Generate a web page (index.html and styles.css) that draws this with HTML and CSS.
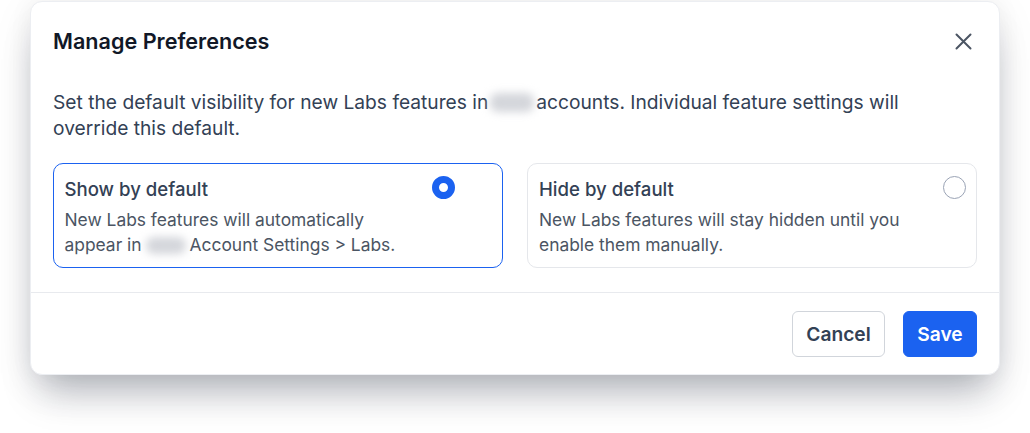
FILE: index.html
```html
<!DOCTYPE html>
<html lang="en">
<head>
<meta charset="utf-8">
<title>Manage Preferences</title>
<link rel="stylesheet" href="styles.css">
</head>
<body>
<div class="modal">
  <div class="modal-header">
    <h2 class="modal-title">Manage Preferences</h2>
    <button class="close-btn" aria-label="Close">
      <svg width="17" height="17" viewBox="0 0 17 17" fill="none" stroke="#4b5563" stroke-width="2" stroke-linecap="round"><path d="M1.5 1.5l14 14M15.5 1.5l-14 14"/></svg>
    </button>
  </div>
  <div class="modal-body">
    <p class="intro">Set the default visibility for new Labs features in<span class="redact"></span>accounts. Individual feature settings will override this default.</p>
    <div class="options">
      <label class="option selected">
        <div class="option-text">
          <div class="option-title">Show by default</div>
          <div class="option-desc">New Labs features will automatically<br>appear in<span class="redact small"></span>Account Settings &gt; Labs.</div>
        </div>
        <span class="radio checked"></span>
      </label>
      <label class="option">
        <div class="option-text">
          <div class="option-title">Hide by default</div>
          <div class="option-desc">New Labs features will stay hidden until you<br>enable them manually.</div>
        </div>
        <span class="radio"></span>
      </label>
    </div>
  </div>
  <div class="modal-footer">
    <button class="btn btn-secondary">Cancel</button>
    <button class="btn btn-primary">Save</button>
  </div>
</div>
</body>
</html>
```

FILE: styles.css
```css
* { box-sizing: border-box; }
html, body { margin: 0; background: #ffffff; }
body {
  font-family: Inter, "Noto Sans", "Liberation Sans", sans-serif;
  padding: 1px 30px 60px 30px;
}
.modal {
  width: 970px;
  background: #fff;
  border: 1px solid #eceef2;
  border-radius: 12px;
  box-shadow: 0 28px 36px -12px rgba(15, 23, 42, 0.28), 0 10px 40px rgba(15, 23, 42, 0.08), 0 0 24px rgba(15, 23, 42, 0.05);
}
.modal-header {
  display: flex;
  justify-content: space-between;
  align-items: center;
  padding: 24px 27px 0 22px;
}
.modal-title {
  margin: 0;
  font-size: 21.6px;
  line-height: 30px;
  font-weight: 600;
  color: #111827;
}
.close-btn {
  border: 0;
  background: none;
  padding: 0;
  width: 17px;
  height: 17px;
  display: flex;
  cursor: pointer;
}
.modal-body {
  padding: 0 22px;
}
.intro {
  margin: 33px 0 0;
  font-size: 19.2px;
  line-height: 26px;
  color: #334155;
}
.redact {
  display: inline-block;
  width: 44px;
  height: 19px;
  margin: 0 2px;
  vertical-align: -3px;
  background: #d4d6db;
  border-radius: 8px;
  filter: blur(4px);
}
.redact.small { width: 40px; height: 17px; margin: 0 4px; }
.options {
  display: grid;
  grid-template-columns: 1fr 1fr;
  gap: 24px;
  margin-top: 22px;
}
.option {
  display: flex;
  justify-content: space-between;
  align-items: flex-start;
  border: 1px solid #e5e7eb;
  border-radius: 10px;
  padding: 12px 10px 10px 11px;
  min-height: 105px;
}
.option.selected {
  border: 1.5px solid #1b62f0;
  padding: 11.5px 9.5px 9.5px 10.5px;
}
.option-title {
  font-size: 18.6px;
  line-height: 26px;
  font-weight: 500;
  color: #334155;
}
.option-desc {
  margin-top: 5px;
  font-size: 17.4px;
  line-height: 25px;
  color: #4b5563;
}
.radio {
  width: 23px;
  height: 23px;
  border-radius: 50%;
  border: 1.5px solid #9aa3b5;
  margin-top: 0;
  flex: none;
}
.option.selected .radio { margin-right: 38px; }
.radio.checked {
  border: 7.5px solid #1b62f0;
  background: #fff;
}
.modal-footer {
  margin-top: 24px;
  border-top: 1px solid #e8eaee;
  display: flex;
  justify-content: flex-end;
  gap: 18px;
  padding: 18px 22px 17px;
}
.btn {
  height: 46px;
  border-radius: 6px;
  font-family: inherit;
  font-size: 19.2px;
  font-weight: 600;
  padding: 0 12px;
  cursor: pointer;
}
.btn-secondary {
  background: #fff;
  color: #334155;
  border: 1px solid #d1d5db;
  width: 93px;
}
.btn-primary {
  background: #1b62f0;
  color: #fff;
  border: 1px solid #1b62f0;
  width: 74px;
}
```
